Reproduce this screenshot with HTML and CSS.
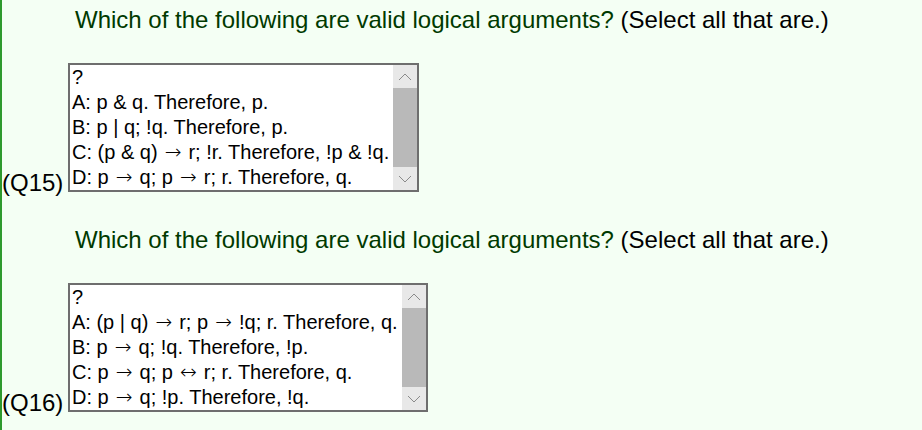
FILE: index.html
```html
<!DOCTYPE html>
<html>
<head>
<meta charset="utf-8">
<link rel="stylesheet" href="styles.css">
</head>
<body>

<div class="quiz">
  <div class="question">
    <p class="prompt"><span class="ask">Which of the following are valid logical arguments?</span> (Select all that are.)</p>
    <div class="answer">
      <span class="qnum">(Q15)</span>
      <div class="listbox" role="listbox" aria-multiselectable="true">
        <div class="options">
          <div class="option">?</div>
          <div class="option">A: p &amp; q. Therefore, p.</div>
          <div class="option">B: p | q; !q. Therefore, p.</div>
          <div class="option">C: (p &amp; q) <span class="op">&rarr;</span> r; !r. Therefore, !p &amp; !q.</div>
          <div class="option">D: p <span class="op">&rarr;</span> q; p <span class="op">&rarr;</span> r; r. Therefore, q.</div>
        </div>
        <div class="scrollbar">
          <div class="arrow"><svg width="14" height="8" viewBox="0 0 14 8"><path d="M1 7 L7 1 L13 7" fill="none" stroke="#8a8a8a" stroke-width="1"/></svg></div>
          <div class="thumb"></div>
          <div class="arrow"><svg width="14" height="8" viewBox="0 0 14 8"><path d="M1 1 L7 7 L13 1" fill="none" stroke="#8a8a8a" stroke-width="1"/></svg></div>
        </div>
      </div>
    </div>
  </div>

  <div class="question">
    <p class="prompt"><span class="ask">Which of the following are valid logical arguments?</span> (Select all that are.)</p>
    <div class="answer">
      <span class="qnum">(Q16)</span>
      <div class="listbox" role="listbox" aria-multiselectable="true">
        <div class="options">
          <div class="option">?</div>
          <div class="option">A: (p | q) <span class="op">&rarr;</span> r; p <span class="op">&rarr;</span> !q; r. Therefore, q.</div>
          <div class="option">B: p <span class="op">&rarr;</span> q; !q. Therefore, !p.</div>
          <div class="option">C: p <span class="op">&rarr;</span> q; p <span class="op">&harr;</span> r; r. Therefore, q.</div>
          <div class="option">D: p <span class="op">&rarr;</span> q; !p. Therefore, !q.</div>
        </div>
        <div class="scrollbar">
          <div class="arrow"><svg width="14" height="8" viewBox="0 0 14 8"><path d="M1 7 L7 1 L13 7" fill="none" stroke="#8a8a8a" stroke-width="1"/></svg></div>
          <div class="thumb"></div>
          <div class="arrow"><svg width="14" height="8" viewBox="0 0 14 8"><path d="M1 1 L7 7 L13 1" fill="none" stroke="#8a8a8a" stroke-width="1"/></svg></div>
        </div>
      </div>
    </div>
  </div>
</div>

</body>
</html>
```

FILE: styles.css
```css
html, body {
    margin: 0;
    height: 100%;
}
body {
    background-color: #f4fff4;
    font-family: "Liberation Sans", Arial, sans-serif;
    color: #000;
    border-left: 2px solid #2e9a2e;
    box-sizing: border-box;
    overflow: hidden;
}
.quiz {
    padding-top: 6px;
}
.question {
    height: 220px;
}
.prompt {
    margin: 0 0 0 73px;
    font-size: 24px;
    line-height: 28px;
}
.ask {
    color: #003a00;
}
.answer {
    display: flex;
    align-items: flex-end;
    margin-top: 29px;
}
.qnum {
    font-size: 24px;
    line-height: 26px;
    width: 66px;
    margin-bottom: -4px;
}
.listbox {
    display: flex;
    background: #fff;
    border: 2px solid #6e6e6e;
    height: 125px;
}
.options {
    padding-left: 2px;
    padding-right: 4px;
    font-size: 20px;
}
.option {
    height: 25px;
    line-height: 25px;
    white-space: nowrap;
}
.op {
    font-family: "DejaVu Sans", sans-serif;
    font-size: 20px;
    font-weight: 200;
    line-height: 1;
    margin: 0 1.5px;
}
.scrollbar {
    width: 24px;
    display: flex;
    flex-direction: column;
    background: #e8e8e8;
}
.arrow {
    height: 23px;
    display: flex;
    align-items: center;
    justify-content: center;
}
.thumb {
    flex: 1;
    background: #b9b9b9;
}
```
